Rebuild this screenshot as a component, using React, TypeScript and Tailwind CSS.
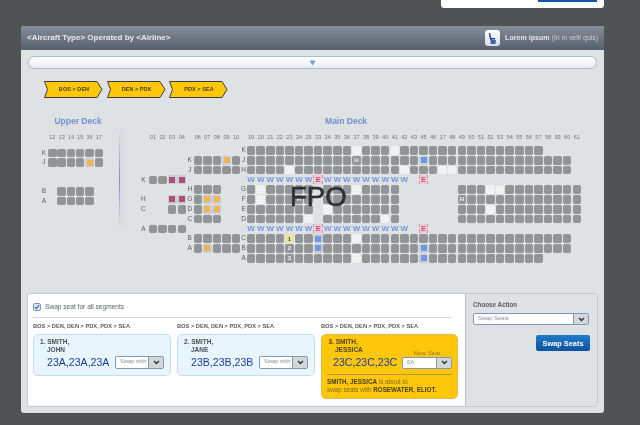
import React from "react";

type Kind = "g" | "w" | "b" | "o" | "p" | "y";

function Seat({ kind = "g", col, row, label }: { kind?: Kind; col: number; row: number; label?: string }) {
  const place = { gridColumn: col, gridRow: row };
  if (kind === "b" || kind === "o" || kind === "p") {
    const inner = kind === "b" ? "bg-[#6f9ae0]" : kind === "o" ? "bg-[#f0b55c]" : "bg-[#ae4f78]";
    return (
      <div style={place} className="flex h-[9.2px] w-[9px] items-center justify-center self-center justify-self-center rounded-[2px] bg-[#c9ccd0]">
        <div className={`h-[6px] w-[6px] ${inner}`} />
      </div>
    );
  }
  const bg = kind === "w" ? "bg-[#f1f3f3]" : kind === "y" ? "bg-[#e4e7a2] text-[#555]" : "bg-[#929496] text-[#f2f2f2]";
  return (
    <div style={place} className={`flex h-[8.7px] w-[8.5px] items-center justify-center self-center justify-self-center rounded-[2px] text-[6px] font-bold leading-none ${bg}`}>
      {label}
    </div>
  );
}

function Letter({ col, row, text }: { col: number; row: number; text: string }) {
  return (
    <div style={{ gridColumn: col, gridRow: row }} className="flex items-center justify-center self-center text-[6.5px] leading-none text-[#555a60]">
      {text}
    </div>
  );
}

function ColLabel({ col, text }: { col: number; text: string }) {
  return (
    <div style={{ gridColumn: col, gridRow: 1 }} className="self-start pt-[3px] text-center text-[5.6px] leading-[7px] text-[#6f7478]">
      {text}
    </div>
  );
}

const range = (a: number, b: number) => Array.from({ length: b - a + 1 }, (_, i) => a + i);
const mainCols = [...range(19, 25), ...range(33, 43), ...range(45, 61)];
const mc = (n: number) => mainCols.indexOf(n) + 13;
const leftCols: Record<number, number> = { 1: 2, 2: 3, 3: 4, 4: 5, 6: 7, 7: 8, 8: 9, 9: 10, 10: 11 };
const pad = (n: number) => (n < 10 ? `0${n}` : `${n}`);

type MainRow = {
  row: number;
  letter: string;
  cols: number[];
  special?: Record<number, Kind>;
  labels?: Record<number, string>;
};

const blockCols = [...range(19, 25), ...range(34, 41), ...range(49, 61)];
const mainRows: MainRow[] = [
  { row: 2, letter: "K", cols: mainCols.filter((c) => c <= 57), special: { 37: "w", 41: "w" } },
  { row: 3, letter: "J", cols: mainCols.filter((c) => c <= 60), special: { 45: "b" }, labels: { 37: "H" } },
  { row: 4, letter: "H", cols: mainCols.filter((c) => c <= 60), special: { 23: "w", 42: "w", 47: "w", 48: "w" } },
  { row: 6, letter: "G", cols: blockCols, special: { 20: "w", 37: "w", 52: "w", 53: "w" } },
  { row: 7, letter: "F", cols: blockCols, special: { 20: "w" }, labels: { 24: "H", 49: "H" } },
  { row: 8, letter: "E", cols: blockCols, special: { 34: "w", 52: "w" } },
  { row: 9, letter: "D", cols: blockCols, special: { 25: "w", 40: "w" } },
  { row: 11, letter: "C", cols: mainCols.filter((c) => c <= 60), special: { 23: "y", 33: "b", 37: "w" }, labels: { 23: "1" } },
  { row: 12, letter: "B", cols: mainCols.filter((c) => c <= 60), special: { 33: "b", 45: "b" }, labels: { 23: "2" } },
  { row: 13, letter: "A", cols: mainCols.filter((c) => c <= 57), special: { 37: "w", 45: "b" }, labels: { 23: "3" } },
];

const leftSeats: [number, number, Kind][] = [
  ...[6, 7, 8, 10].map((c) => [3, c, "g"] as [number, number, Kind]),
  [3, 9, "o"],
  ...[6, 7, 8, 9, 10].map((c) => [4, c, "g"] as [number, number, Kind]),
  [5, 1, "g"], [5, 2, "g"], [5, 3, "p"], [5, 4, "p"],
  [6, 6, "g"], [6, 7, "g"], [6, 8, "g"],
  [7, 3, "p"], [7, 4, "p"], [7, 6, "g"], [7, 7, "o"], [7, 8, "o"],
  [8, 3, "g"], [8, 4, "g"], [8, 6, "g"], [8, 7, "o"], [8, 8, "o"],
  [9, 6, "g"], [9, 7, "g"], [9, 8, "g"],
  [10, 1, "g"], [10, 2, "g"], [10, 3, "g"], [10, 4, "g"],
  ...[6, 7, 8, 9, 10].map((c) => [11, c, "g"] as [number, number, Kind]),
  [12, 6, "g"], [12, 7, "o"], [12, 8, "g"], [12, 9, "g"], [12, 10, "g"],
];

const leftLetters: [number, number, string][] = [
  [3, 6, "K"], [4, 6, "J"], [5, 1, "K"], [6, 6, "H"], [7, 1, "H"], [7, 6, "G"],
  [8, 1, "C"], [8, 6, "D"], [9, 6, "C"], [10, 1, "A"], [11, 6, "B"], [12, 6, "A"],
];

function WRow({ row }: { row: number }) {
  return (
    <>
      {[...range(19, 25), ...range(34, 42)].map((c) => (
        <div key={c} style={{ gridColumn: mc(c), gridRow: row }} className="self-center text-center text-[8px] font-bold leading-none text-[#7396da]">
          W
        </div>
      ))}
      {[33, 45].map((c) => (
        <div key={c} style={{ gridColumn: mc(c), gridRow: row }} className="flex h-[9px] items-center justify-center self-center border-x border-dashed border-[#e58aa6] bg-[#e9cdd8] text-[7.5px] font-bold leading-none text-[#d84b74]">
          E
        </div>
      ))}
    </>
  );
}

function SeatMap() {
  return (
    <div className="grid grid-cols-[9.6px_repeat(4,9.6px)_6.4px_repeat(5,9.6px)_5.4px_repeat(35,9.59px)] grid-rows-[15px_repeat(12,9.8px)]">
      {Object.entries(leftCols).map(([n, c]) => (
        <ColLabel key={n} col={c} text={pad(Number(n))} />
      ))}
      {mainCols.map((n) => (
        <ColLabel key={n} col={mc(n)} text={n === 47 ? "17" : `${n}`} />
      ))}
      {leftSeats.map(([r, c, k]) => (
        <Seat key={`l${r}-${c}`} row={r} col={leftCols[c]} kind={k} />
      ))}
      {leftLetters.map(([r, c, t]) => (
        <Letter key={`ll${r}-${c}`} row={r} col={c} text={t} />
      ))}
      {mainRows.map((r) => (
        <React.Fragment key={r.row}>
          <Letter row={r.row} col={12} text={r.letter} />
          {r.cols.map((c) => (
            <Seat key={c} row={r.row} col={mc(c)} kind={r.special?.[c] ?? "g"} label={r.labels?.[c]} />
          ))}
        </React.Fragment>
      ))}
      <WRow row={5} />
      <WRow row={10} />
    </div>
  );
}

function UpperDeck() {
  const cols = range(12, 17);
  return (
    <div className="w-[76px]">
      <div className="h-[15px] text-center text-[8.5px] font-bold leading-[13px] text-[#7390c8]">Upper Deck</div>
      <div className="mt-[0.6px] grid grid-cols-[7.7px_repeat(6,9.3px)] grid-rows-[17.6px_repeat(6,9.6px)]">
        {cols.map((n, i) => (
          <ColLabel key={n} col={i + 2} text={`${n}`} />
        ))}
        <Letter row={2} col={1} text="K" />
        <Letter row={3} col={1} text="J" />
        <Letter row={6} col={1} text="B" />
        <Letter row={7} col={1} text="A" />
        {cols.map((n, i) => (
          <Seat key={`k${n}`} row={2} col={i + 2} />
        ))}
        {cols.map((n, i) => (
          <Seat key={`j${n}`} row={3} col={i + 2} kind={n === 16 ? "o" : "g"} />
        ))}
        {[13, 14, 15, 16].map((n) => (
          <React.Fragment key={n}>
            <Seat row={6} col={n - 10} />
            <Seat row={7} col={n - 10} />
          </React.Fragment>
        ))}
      </div>
    </div>
  );
}

function Chevron({ text }: { text: string }) {
  return (
    <div className="relative flex h-[17px] w-[59px] items-center justify-center pl-[1px] text-[5.6px] font-bold text-[#4a3d10]">
      <svg className="absolute inset-0" width="59" height="17" viewBox="0 0 59 17">
        <polygon points="0.5,0.5 53,0.5 58,8.5 53,16.5 0.5,16.5 3.5,8.5" fill="#ffc70a" stroke="#3b3d40" strokeWidth="1" />
      </svg>
      <span className="relative">{text}</span>
    </div>
  );
}

function Caret() {
  return (
    <svg width="7" height="5" viewBox="0 0 7 5">
      <path d="M1 1l2.5 2.5L6 1" fill="none" stroke="#2b2f36" strokeWidth="1.4" />
    </svg>
  );
}

function FakeSelect({ text, className, btn = "w-[15px]" }: { text: string; className: string; btn?: string }) {
  return (
    <div className={`flex items-stretch overflow-hidden rounded-[2px] border border-[#7f97bd] bg-white ${className}`}>
      <div className="flex flex-1 items-center pl-[4px] text-[5.8px] leading-none text-[#8c8f94]">{text}</div>
      <div className={`flex items-center justify-center border-l border-[#8d97a5] bg-[#d5d6d9] ${btn}`}>
        <Caret />
      </div>
    </div>
  );
}

function Passenger({ n, last, first, seats }: { n: number; last: string; first: string; seats: string }) {
  return (
    <div className="h-[42px] w-[138px] rounded-[5px] border border-[#c4dcee] bg-[#e9f5fd] pl-[6px] pr-[6px] pt-[3px]">
      <div className="text-[6.5px] font-bold leading-[8.5px] text-[#4a4f57]">
        <div>{n}. {last}</div>
        <div className="pl-[7px]">{first}</div>
      </div>
      <div className="mt-[1px] flex items-center justify-between pl-[7px]">
        <div className="text-[10.6px] leading-[13px] text-[#1b3b9e]">{seats}</div>
        <FakeSelect text="Swap with" className="h-[13px] w-[49px]" />
      </div>
    </div>
  );
}

function Segs() {
  return <div className="text-[5.7px] font-bold leading-[8px] text-[#555a60]">BOS &gt; DEN, DEN &gt; PDX, PDX &gt; SEA</div>;
}

export default function App() {
  return (
    <div className="relative h-[425px] w-[640px] overflow-hidden bg-[#505354] font-['Liberation_Sans',Arial,sans-serif] blur-[0.4px]">
      <div className="ml-[441px] flex h-[8px] w-[163px] justify-end rounded-b-[3px] bg-white pr-[7px]">
        <div className="h-[2px] w-[59px] bg-[#1257a8]" />
      </div>

      <div className="ml-[21px] mt-[18px] w-[583px] overflow-hidden rounded-[3px] bg-[#dfe2e5]">
        <div className="flex h-[24px] items-center justify-between bg-gradient-to-b from-[#868d97] to-[#56616e] pl-[6px] pr-[6px]">
          <div className="text-[8px] font-bold text-[#e9ebee]">&lt;Aircraft Type&gt; Operated by &lt;Airline&gt;</div>
          <div className="flex items-center">
            <div className="mr-[5px] flex h-[16px] w-[15px] items-center justify-center rounded-[3px] bg-gradient-to-b from-white to-[#d5dbe5]">
              <svg width="11" height="12" viewBox="0 0 11 12">
                <path d="M2.5 1.2l1.2 5.6h4.4M4 6.8l.4 2.2h4.6M6 9v1.5M3.6 11h5" fill="none" stroke="#21409a" strokeWidth="1.5" />
              </svg>
            </div>
            <span className="text-[7.1px] font-bold text-[#e4e7ea]">Lorem ipsum</span>
            <span className="ml-[2px] text-[6.9px] text-[#c9ced4]">(In in velit quis)</span>
          </div>
        </div>

        <div className="mx-[7px] mt-[6px] flex h-[13px] items-center justify-center rounded-full border border-[#a8bbdc] bg-gradient-to-b from-white to-[#e9ecee] pr-[1px]">
          <svg width="7" height="6" viewBox="0 0 7 6">
            <polygon points="0.5,0.5 6.5,0.5 3.5,5.5" fill="#8397bd" />
          </svg>
        </div>

        <div className="ml-[23px] mt-[12px] flex gap-[3.5px]">
          <Chevron text="BOS > DEN" />
          <Chevron text="DEN > PDX" />
          <Chevron text="PDX > SEA" />
        </div>

        <div className="relative mt-[17px] flex items-start pl-[19px]">
          <UpperDeck />
          <div className="ml-[3px] mt-[15px] h-[98px] w-[1px] bg-gradient-to-b from-[#dfe2e5] via-[#7b90b8] to-[#dfe2e5] shadow-[3px_0_5px_#b9c2d0]" />
          <div className="ml-[18.6px]">
            <div className="h-[15.6px] pr-[28px] text-center text-[8.5px] font-bold leading-[13px] text-[#7390c8]">Main Deck</div>
            <SeatMap />
          </div>
          <div className="absolute left-[269px] top-[66px] text-[27.5px] font-normal leading-[32px] text-[#2e3033] [-webkit-text-stroke:0.6px_#2e3033]">FPO</div>
        </div>

        <div className="mx-[6px] mt-[30px] flex h-[114px] overflow-hidden rounded-[4px] border border-[#c5c9cd]">
          <div className="w-[437px] bg-white pl-[5px] pt-[7px]">
            <div className="flex h-[12px] items-center">
              <div className="flex h-[8px] w-[8px] items-center justify-center rounded-[2px] border border-[#7f97bd] bg-[#dbe6f4]">
                <svg width="7" height="6" viewBox="0 0 7 6">
                  <path d="M1 3l1.8 1.8L6 1" fill="none" stroke="#21409a" strokeWidth="1.2" />
                </svg>
              </div>
              <span className="ml-[4px] text-[6.6px] leading-none text-[#5d6268]">Swap seat for all segments</span>
            </div>
            <div className="mr-[14px] mt-[4px] h-[1px] bg-[#d3d5d8]" />
            <div className="mt-[4px] flex gap-[6px]">
              <div className="w-[138px]">
                <Segs />
                <div className="mt-[3.5px]">
                  <Passenger n={1} last="SMITH," first="JOHN" seats="23A,23A,23A" />
                </div>
              </div>
              <div className="w-[138px]">
                <Segs />
                <div className="mt-[3.5px]">
                  <Passenger n={2} last="SMITH," first="JANE" seats="23B,23B,23B" />
                </div>
              </div>
              <div className="w-[137px]">
                <Segs />
                <div className="mt-[3.5px] h-[65px] rounded-[5px] border border-[#e3b84e] bg-[#ffc70a] px-[5px] pt-[3px]">
                  <div className="pl-[1.5px] text-[6.5px] font-bold leading-[8.5px] text-[#4d4420]">
                    <div>3. SMITH,</div>
                    <div className="pl-[6.5px]">JESSICA</div>
                  </div>
                  <div className="-mt-[6px] flex items-end justify-between pl-[6px]">
                    <div className="text-[10.6px] leading-[13px] text-[#1b3b9e]">23C,23C,23C</div>
                    <div className="w-[50px]">
                      <div className="text-center text-[6.2px] leading-[8px] text-[#8d7a2a]">New Seat</div>
                      <FakeSelect text="6A" className="h-[12px] w-[50px]" />
                    </div>
                  </div>
                  <div className="mt-[5.5px] h-[1px] bg-[#b5993a]" />
                  <div className="mt-[2.5px] text-[6.3px] leading-[8.8px] text-[#7d6c1c]">
                    <div><b className="text-[#453d1c]">SMITH, JESSICA</b> is about to</div>
                    <div>swap seats with <b className="text-[#453d1c]">ROSEWATER, ELIOT.</b></div>
                  </div>
                </div>
              </div>
            </div>
          </div>
          <div className="flex-1 border-l border-[#b9bdc2] bg-[#dfe2e5] pl-[7px] pr-[7px] pt-[7px]">
            <div className="text-[6.3px] font-bold leading-[8px] text-[#555a60]">Choose Action</div>
            <FakeSelect text="Swap Seats" className="mt-[4px] h-[12px] w-[116px]" />
            <div className="mt-[10px] flex justify-end">
              <div className="flex h-[16px] w-[54px] items-center justify-center rounded-[2px] bg-gradient-to-b from-[#1f7cca] to-[#0d539d] text-[7.4px] font-bold text-white">
                Swap Seats
              </div>
            </div>
          </div>
        </div>
        <div className="h-[6px]" />
      </div>
    </div>
  );
}
